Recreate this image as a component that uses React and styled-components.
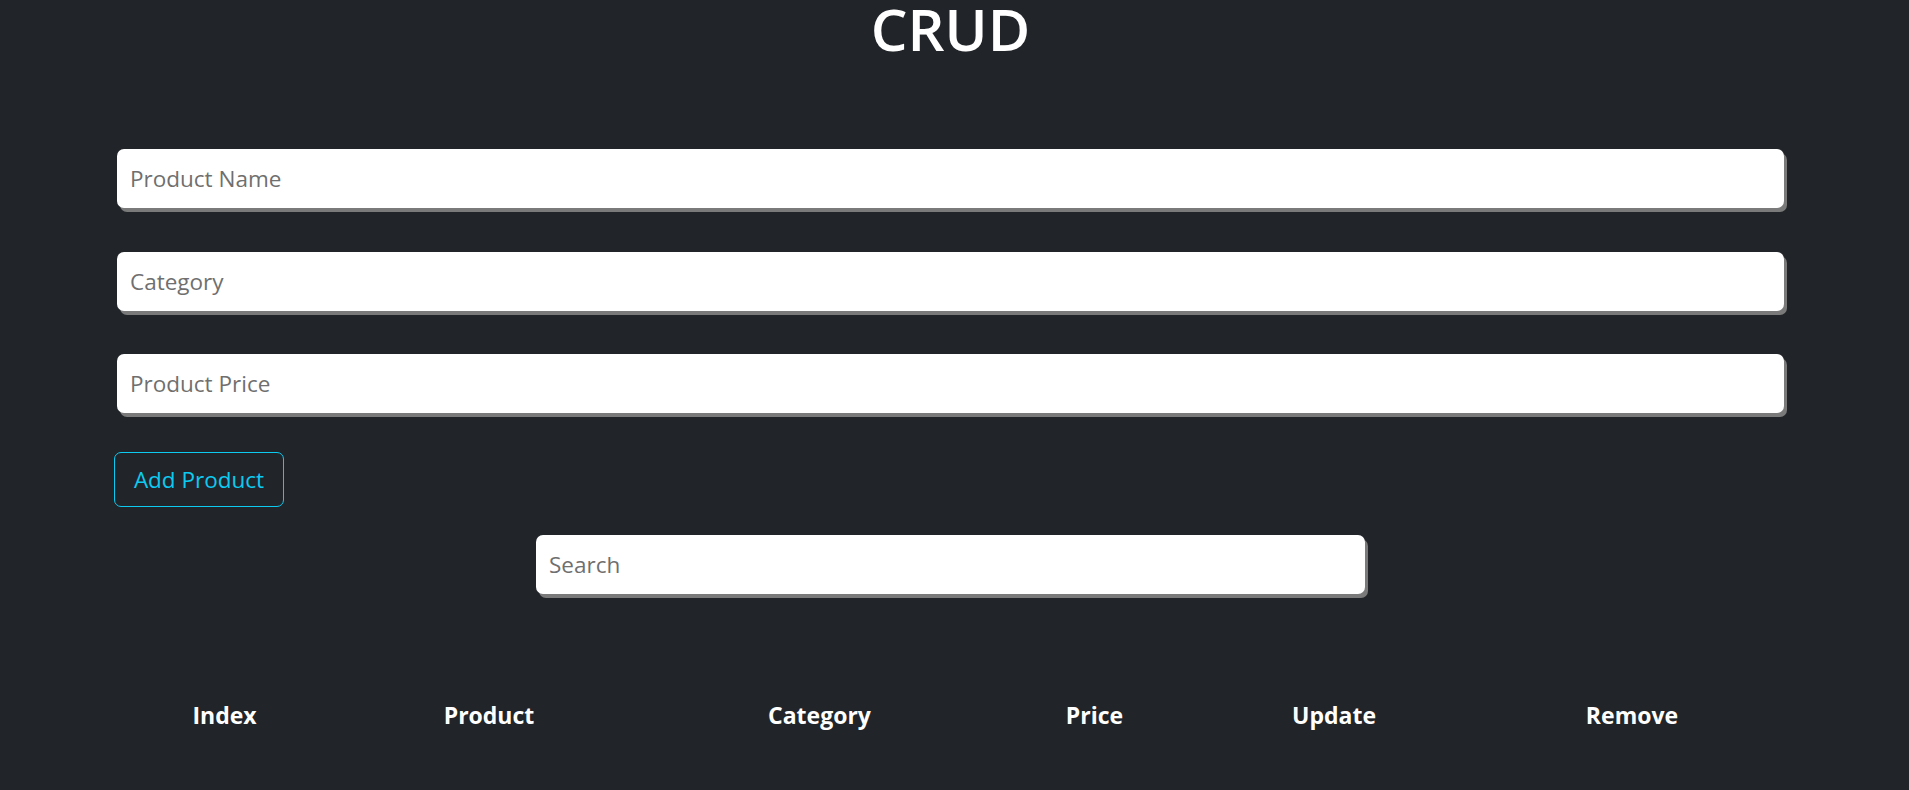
import React from 'react';
import styled, { createGlobalStyle } from 'styled-components';

const GlobalStyle = createGlobalStyle`
  body {
    margin: 0;
    background: #212529;
    color: #fff;
    font-family: 'Open Sans', 'Noto Sans', sans-serif;
  }
  * {
    box-sizing: border-box;
  }
`;

const columns = [
  { label: 'Index', width: 215 },
  { label: 'Product', width: 314 },
  { label: 'Category', width: 347 },
  { label: 'Price', width: 203 },
  { label: 'Update', width: 276 },
  { label: 'Remove', width: 320 },
];

const App = () => {
  return (
    <Page>
      <GlobalStyle />
      <Title>CRUD</Title>
      <Form>
        <Field type="text" placeholder="Product Name" />
        <Field type="text" placeholder="Category" />
        <Field type="text" placeholder="Product Price" />
      </Form>
      <AddButton type="button">Add Product</AddButton>
      <SearchBox>
        <Field type="text" placeholder="Search" />
      </SearchBox>
      <Table>
        <colgroup>
          {columns.map((c) => (
            <col key={c.label} style={{ width: c.width }} />
          ))}
        </colgroup>
        <thead>
          <tr>
            {columns.map((c) => (
              <Th key={c.label}>{c.label}</Th>
            ))}
          </tr>
        </thead>
        <tbody></tbody>
      </Table>
    </Page>
  );
};

export default App;

const Page = styled.div`
  min-height: 100vh;
  padding: 0 125px 40px 117px;
`;

const Title = styled.h1`
  margin: 0;
  text-align: center;
  font-size: 58px;
  line-height: 1;
  font-weight: 600;
  color: #fff;
`;

const Form = styled.div`
  display: flex;
  flex-direction: column;
  gap: 43.5px;
  margin-top: 91px;
`;

const Field = styled.input`
  width: 100%;
  height: 59px;
  padding: 0 13px;
  border: none;
  border-radius: 7px;
  background: #fff;
  box-shadow: 3px 4px 0 #7a7a7a;
  font-family: 'Open Sans', 'Noto Sans', sans-serif;
  font-size: 22.5px;
  color: #212529;
  outline: none;

  &::placeholder {
    color: #6f6f6f;
  }
`;

const AddButton = styled.button`
  display: block;
  width: 170px;
  height: 55px;
  margin: 39px 0 0 -3px;
  padding: 0;
  border: 1px solid #0dcaf0;
  border-radius: 7px;
  background: transparent;
  color: #0dcaf0;
  font-family: 'Open Sans', 'Noto Sans', sans-serif;
  font-size: 22.5px;
  cursor: pointer;
`;

const SearchBox = styled.div`
  width: 829px;
  margin: 28px auto 0;
`;

const Table = styled.table`
  width: 1675px;
  margin-top: 96px;
  border-collapse: collapse;
  table-layout: fixed;
`;

const Th = styled.th`
  padding: 8px;
  text-align: center;
  font-size: 23px;
  line-height: 1.5;
  font-weight: 700;
  color: #fff;
`;
